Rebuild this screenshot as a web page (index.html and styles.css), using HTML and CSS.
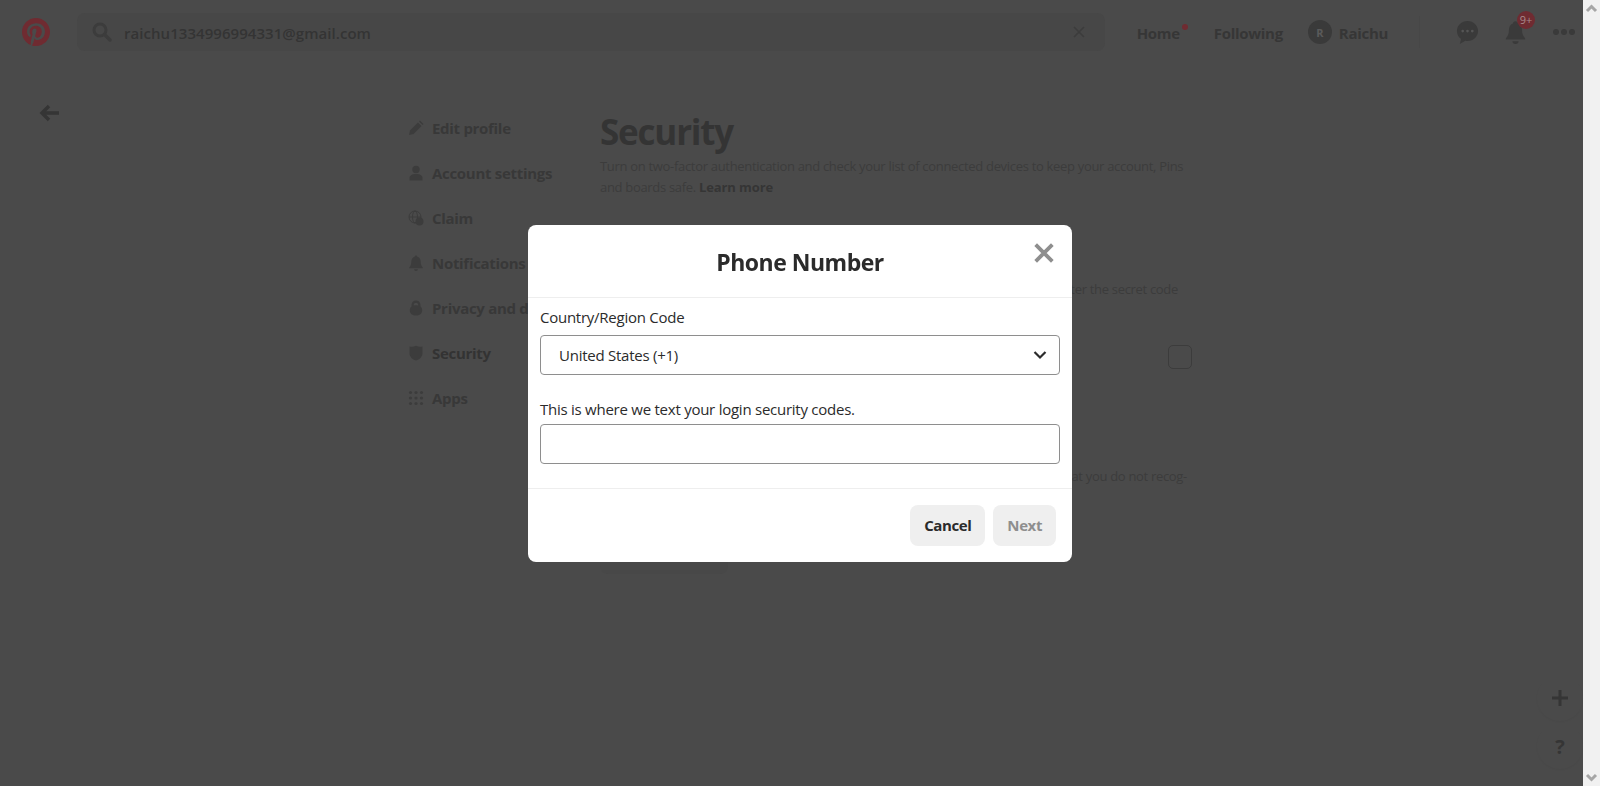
FILE: index.html
```html
<!DOCTYPE html>
<html lang="en">
<head>
  <meta charset="UTF-8">
  <meta name="viewport" content="width=device-width, initial-scale=1.0">
  <title>Security</title>
  <link rel="stylesheet" href="styles.css">
</head>
<body>
  <div class="page">
    <header class="topbar">
      <svg class="logo" viewBox="0 0 24 24"><path fill="#6f2b31" d="M12 0C5.373 0 0 5.372 0 12c0 5.084 3.163 9.426 7.627 11.174-.105-.949-.2-2.405.042-3.441.218-.937 1.407-5.965 1.407-5.965s-.359-.719-.359-1.782c0-1.668.967-2.914 2.171-2.914 1.023 0 1.518.769 1.518 1.69 0 1.029-.655 2.568-.994 3.995-.283 1.194.599 2.169 1.777 2.169 2.133 0 3.772-2.249 3.772-5.495 0-2.873-2.064-4.882-5.012-4.882-3.414 0-5.418 2.561-5.418 5.207 0 1.031.397 2.138.893 2.738.098.119.112.224.083.345l-.333 1.36c-.053.22-.174.267-.402.161-1.499-.698-2.436-2.889-2.436-4.649 0-3.785 2.75-7.262 7.929-7.262 4.163 0 7.398 2.967 7.398 6.931 0 4.136-2.607 7.464-6.227 7.464-1.216 0-2.359-.631-2.75-1.378l-.748 2.853c-.271 1.043-1.002 2.35-1.492 3.146C9.57 23.812 10.763 24 12 24c6.627 0 12-5.373 12-12 0-6.628-5.373-12-12-12z"/></svg>
      <div class="search">
        <svg class="search-icon" viewBox="0 0 20 20"><circle cx="8" cy="8" r="6" fill="none" stroke="#3c3c3c" stroke-width="3"/><path d="M12.5 12.5 18 18" stroke="#3c3c3c" stroke-width="3.4" stroke-linecap="round"/></svg>
        <span class="search-text">raichu1334996994331@gmail.com</span>
        <svg class="search-clear" viewBox="0 0 12 12"><path d="M1 1l10 10M11 1 1 11" stroke="#3c3c3c" stroke-width="1.6"/></svg>
      </div>
      <nav class="topnav">
        <a class="topnav-link has-dot">Home</a>
        <a class="topnav-link">Following</a>
        <span class="avatar">R</span>
        <a class="topnav-link">Raichu</a>
      </nav>
      <div class="top-actions">
        <svg class="chat-icon" viewBox="0 0 24 26"><path fill="#3a3a3a" d="M12 1C5.6 1 1 5.6 1 11.500c0 3.600 1.700 6.500 4.300 8.400L4 25l5.600-3.400c.8.200 1.600.300 2.400.300 6.400 0 11-4.700 11-10.400S18.400 1 12 1z"/><circle cx="7" cy="11.500" r="1.400" fill="#555"/><circle cx="12" cy="11.500" r="1.400" fill="#555"/><circle cx="17" cy="11.500" r="1.400" fill="#555"/></svg>
        <div class="bell-wrap">
          <svg class="bell-icon" viewBox="0 0 24 28"><path fill="#3a3a3a" d="M12 1c-1.700 0-3 1.300-3 2.800C5.800 5 4.500 8 4.500 11.500c0 4.500-1.500 7-3.500 9v1.500h22v-1.500c-2-2-3.500-4.500-3.500-9C19.500 8 18.200 5 15 3.800 15 2.300 13.700 1 12 1zM8.500 24a3.500 3 0 0 0 7 0z"/></svg>
          <span class="badge">9+</span>
        </div>
        <div class="more"><i></i><i></i><i></i></div>
      </div>
    </header>

    <main class="settings">
      <div class="back-col">
        <svg class="back" viewBox="0 0 22 18"><path d="M20 9H3M10 2 3 9l7 7" fill="none" stroke="#353535" stroke-width="3.400"/></svg>
      </div>
      <ul class="side-menu">
        <li><svg viewBox="0 0 16 16"><path d="M1 15l1-4.500 8-8L13.500 6l-8 8zM11 1.500l1-1L15.500 4l-1 1z"/></svg>Edit profile</li>
        <li><svg viewBox="0 0 16 16"><circle cx="8" cy="4.500" r="3.700"/><path d="M1.500 15.500v-2.500c0-2.500 2.500-4 6.500-4s6.500 1.500 6.500 4v2.500z"/></svg>Account settings</li>
        <li><svg viewBox="0 0 16 16"><g fill="none" stroke="#3c3c3c" stroke-width="1"><circle cx="7" cy="7" r="6"/><ellipse cx="7" cy="7" rx="2.500" ry="6"/><path d="M1 7h12"/></g><circle cx="11.500" cy="11.500" r="4"/></svg>Claim</li>
        <li><svg viewBox="0 0 16 16"><path d="M8 .5c-.8 0-1.300.6-1.400 1.300C4.200 2.500 3.300 4.600 3.300 7c0 2.800-1 4.300-2 5.300v1h13.400v-1c-1-1-2-2.500-2-5.300 0-2.400-.9-4.500-3.300-5.200C9.300 1.100 8.800.5 8 .5zM6 14.300a2 1.700 0 0 0 4 0z"/></svg>Notifications</li>
        <li><svg viewBox="0 0 16 16"><path fill-rule="evenodd" d="M8 .5c-2.700 0-4.500 2-4.500 4.500v1.600C2.300 7.700 1.800 9 1.800 10.400c0 3 2.800 5.200 6.200 5.200s6.200-2.200 6.200-5.200c0-1.400-.5-2.700-1.700-3.800V5C12.500 2.500 10.700.5 8 .5zm0 2.200c1.400 0 2.300 1 2.300 2.400v.4A7 7 0 0 0 8 5.200c-.8 0-1.600.1-2.300.3v-.4c0-1.400.9-2.400 2.300-2.400z"/></svg>Privacy and data</li>
        <li class="is-current"><svg viewBox="0 0 16 16"><path d="M1.500 1.500C4 2 6 1.800 8 .8c2 1 4 1.200 6.500.7v6.500c0 4-3 6.500-6.500 7.500C4.500 14.500 1.500 12 1.500 8z"/></svg>Security</li>
        <li><svg viewBox="0 0 16 16"><circle cx="2.500" cy="2.500" r="1.600"/><circle cx="8" cy="2.500" r="1.600"/><circle cx="13.500" cy="2.500" r="1.600"/><circle cx="2.500" cy="8" r="1.600"/><circle cx="8" cy="8" r="1.600"/><circle cx="13.500" cy="8" r="1.600"/><circle cx="2.500" cy="13.500" r="1.600"/><circle cx="8" cy="13.500" r="1.600"/><circle cx="13.500" cy="13.500" r="1.600"/></svg>Apps</li>
      </ul>
      <section class="security">
        <h1>Security</h1>
        <p class="intro">Turn on two-factor authentication and check your list of connected devices to keep your account, Pins and boards safe. <strong>Learn more</strong></p>
        <p class="note note-tfa">Each time you log in you will enter the secret code</p>
        <div class="check-row"><span class="check"></span></div>
        <p class="note note-devices">Review the devices you are logged in from and remove any that you do not recog-</p>
        <div class="ghost-btn"></div>
      </section>
    </main>

    <div class="fab fab-add">
      <svg viewBox="0 0 16 16"><path d="M8 0v16M0 8h16" stroke="#353535" stroke-width="3"/></svg>
    </div>
    <div class="fab fab-help">?</div>
  </div>

  <div class="scrollbar">
    <svg viewBox="0 0 17 17"><path d="M4 11l4.500-4.500L13 11" fill="none" stroke="#a6a6a6" stroke-width="3"/></svg>
    <svg viewBox="0 0 17 17"><path d="M4 6l4.500 4.500L13 6" fill="none" stroke="#a6a6a6" stroke-width="3"/></svg>
  </div>

  <div class="modal-layer">
    <div class="modal">
      <div class="modal-head">
        <h2>Phone Number</h2>
        <svg class="modal-close" viewBox="0 0 18 18"><path d="M1.500 1.500l15 15M16.500 1.500l-15 15" stroke="#8e8e8e" stroke-width="3.400"/></svg>
      </div>
      <div class="modal-body">
        <label class="field-label">Country/Region Code</label>
        <div class="field field-select">
          <span>United States (+1)</span>
          <svg viewBox="0 0 14 10"><path d="M1.500 2 7 7.500 12.500 2" fill="none" stroke="#2b2b2b" stroke-width="2.200"/></svg>
        </div>
        <label class="field-label second">This is where we text your login security codes.</label>
        <div class="field field-phone"></div>
      </div>
      <div class="modal-foot">
        <button class="btn">Cancel</button>
        <button class="btn btn-off">Next</button>
      </div>
    </div>
  </div>
</body>
</html>
```

FILE: styles.css
```css
* {
  box-sizing: border-box;
}
html, body {
  height: 100%;
}
body {
  margin: 0;
  display: flex;
  overflow: hidden;
  background-color: #4a4a4a;
  color: #383838;
  font-family: "Open Sans", "Noto Sans", sans-serif;
}
.page {
  position: relative;
  flex: 1;
  min-width: 0;
}

/* top bar */
.topbar {
  height: 64px;
  display: flex;
  align-items: center;
  padding: 0 8px 0 22px;
}
.logo {
  width: 28px;
  height: 28px;
  flex-shrink: 0;
}
.search {
  width: 1030px;
  height: 38px;
  margin-left: 27px;
  padding: 0 20px 0 15px;
  display: flex;
  align-items: center;
  border-radius: 8px;
  background-color: #474747;
}
.search-icon {
  width: 20px;
  height: 20px;
}
.search-text {
  margin: 2px 0 0 12px;
  font-size: 15px;
  font-weight: 600;
  letter-spacing: 0.05px;
  color: #343434;
}
.search-clear {
  width: 12px;
  height: 12px;
  margin-left: auto;
}
.topnav {
  display: flex;
  align-items: center;
  margin-left: 32px;
  font-size: 15px;
  font-weight: 700;
  letter-spacing: -0.3px;
}
.topnav-link {
  position: relative;
  margin-top: 2px;
  color: #363636;
}
.has-dot {
  margin-right: 34px;
}
.has-dot::after {
  content: "";
  position: absolute;
  top: 1px;
  right: -8px;
  width: 6px;
  height: 6px;
  border-radius: 50%;
  background-color: #6f2b31;
}
.avatar {
  width: 24px;
  height: 24px;
  margin: 0 7px 0 25px;
  display: flex;
  align-items: center;
  justify-content: center;
  border-radius: 50%;
  background-color: #3a3a3a;
  color: #5a5a5a;
  font-size: 11px;
}
.top-actions {
  display: flex;
  align-items: center;
  margin-left: 31px;
  padding-left: 36px;
  border-left: 1px solid #474747;
  height: 32px;
}
.chat-icon {
  width: 23px;
  height: 25px;
}
.bell-wrap {
  position: relative;
  width: 21px;
  height: 25px;
  margin-left: 26px;
}
.bell-icon {
  width: 21px;
  height: 25px;
}
.badge {
  position: absolute;
  top: -9px;
  left: 12px;
  width: 18px;
  height: 18px;
  border-radius: 50%;
  background-color: #6f2b31;
  color: #a98a8c;
  font-size: 11px;
  line-height: 18px;
  text-align: center;
}
.more {
  display: flex;
  gap: 2px;
  margin-left: 27px;
}
.more i {
  width: 6px;
  height: 6px;
  border-radius: 50%;
  background-color: #3a3a3a;
}

/* settings page behind the dialog */
.settings {
  display: flex;
  padding: 41px 0 0 39px;
}
.back-col {
  width: 369px;
}
.back {
  width: 22px;
  height: 18px;
  margin-top: -7px;
}
.side-menu {
  width: 192px;
  margin: 0;
  padding: 0;
  list-style: none;
  font-size: 15px;
  font-weight: 700;
  letter-spacing: -0.3px;
  color: #383838;
}
.side-menu li {
  height: 45px;
  display: flex;
  align-items: center;
  gap: 8px;
  white-space: nowrap;
}
.side-menu svg {
  width: 16px;
  height: 16px;
  fill: #3c3c3c;
}
.side-menu .is-current {
  color: #333;
}
.security {
  width: 590px;
}
.security h1 {
  margin: 3px 0 0;
  font-size: 35px;
  line-height: 48px;
  font-weight: 700;
  letter-spacing: -1.2px;
  color: #343434;
}
.intro,
.note {
  margin: 0;
  font-size: 13px;
  line-height: 21px;
  font-weight: 400;
  letter-spacing: -0.31px;
  color: #3c3c3c;
}
.intro strong {
  font-weight: 700;
  letter-spacing: -0.1px;
  color: #353535;
}
.note {
  text-align: right;
  white-space: nowrap;
}
.note-tfa {
  margin-top: 81px;
  padding-right: 12px;
}
.check-row {
  display: flex;
  justify-content: flex-end;
  margin-top: 45px;
}
.check {
  width: 24px;
  height: 24px;
  margin-right: -2px;
  border: 1px solid #3c3c3c;
  border-radius: 5px;
}
.note-devices {
  margin-top: 97px;
  padding-right: 3px;
}
.ghost-btn {
  width: 128px;
  height: 42px;
  margin-top: 45px;
  border-radius: 8px;
  background-color: #484848;
}
.fab {
  position: absolute;
  left: 1537px;
  width: 46px;
  height: 46px;
  display: flex;
  align-items: center;
  justify-content: center;
  border-radius: 50%;
  box-shadow: 0 1px 2px rgba(0, 0, 0, 0.03);
}
.fab-add {
  top: 675px;
}
.fab-add svg {
  width: 16px;
  height: 16px;
}
.fab-help {
  top: 723px;
  font-size: 20px;
  font-weight: 700;
  color: #353535;
}

/* scrollbar */
.scrollbar {
  width: 17px;
  flex-shrink: 0;
  display: flex;
  flex-direction: column;
  justify-content: space-between;
  background-color: #f1f1f1;
}
.scrollbar svg {
  width: 17px;
  height: 17px;
}

/* dialog */
.modal-layer {
  position: fixed;
  top: 0;
  left: 0;
  width: 100%;
  height: 100%;
  display: flex;
  align-items: center;
  justify-content: center;
}
.modal {
  width: 544px;
  border-radius: 8px;
  background-color: #fff;
  color: #2b2b2b;
}
.modal-head {
  position: relative;
  height: 73px;
  display: flex;
  align-items: center;
  justify-content: center;
  border-bottom: 1px solid #eee;
}
.modal-head h2 {
  margin: 2px 0 0;
  font-size: 23px;
  font-weight: 700;
  letter-spacing: -0.5px;
}
.modal-close {
  position: absolute;
  top: 18px;
  right: 18px;
  width: 20px;
  height: 20px;
}
.modal-body {
  padding: 7px 12px 24px;
  border-bottom: 1px solid #eee;
}
.field-label {
  display: block;
  font-size: 15px;
  line-height: 24px;
  letter-spacing: -0.25px;
}
.field-label.second {
  margin-top: 23px;
  line-height: 22px;
}
.field {
  height: 40px;
  margin-top: 6px;
  border: 1px solid #8e8e8e;
  border-radius: 4px;
}
.field-phone {
  margin-top: 4px;
}
.field-select {
  display: flex;
  align-items: center;
  justify-content: space-between;
  padding: 0 12px 0 18px;
  font-size: 15px;
  letter-spacing: -0.25px;
}
.field-select svg {
  width: 14px;
  height: 10px;
}
.modal-foot {
  display: flex;
  justify-content: flex-end;
  gap: 8px;
  padding: 16px 16px 16px;
}
.btn {
  height: 41px;
  padding: 0 14px;
  border: none;
  border-radius: 8px;
  background-color: #efefef;
  color: #2b2b2b;
  font-family: inherit;
  font-size: 15px;
  font-weight: 700;
  letter-spacing: -0.4px;
}
.btn-off {
  color: #8e8e8e;
}
```
